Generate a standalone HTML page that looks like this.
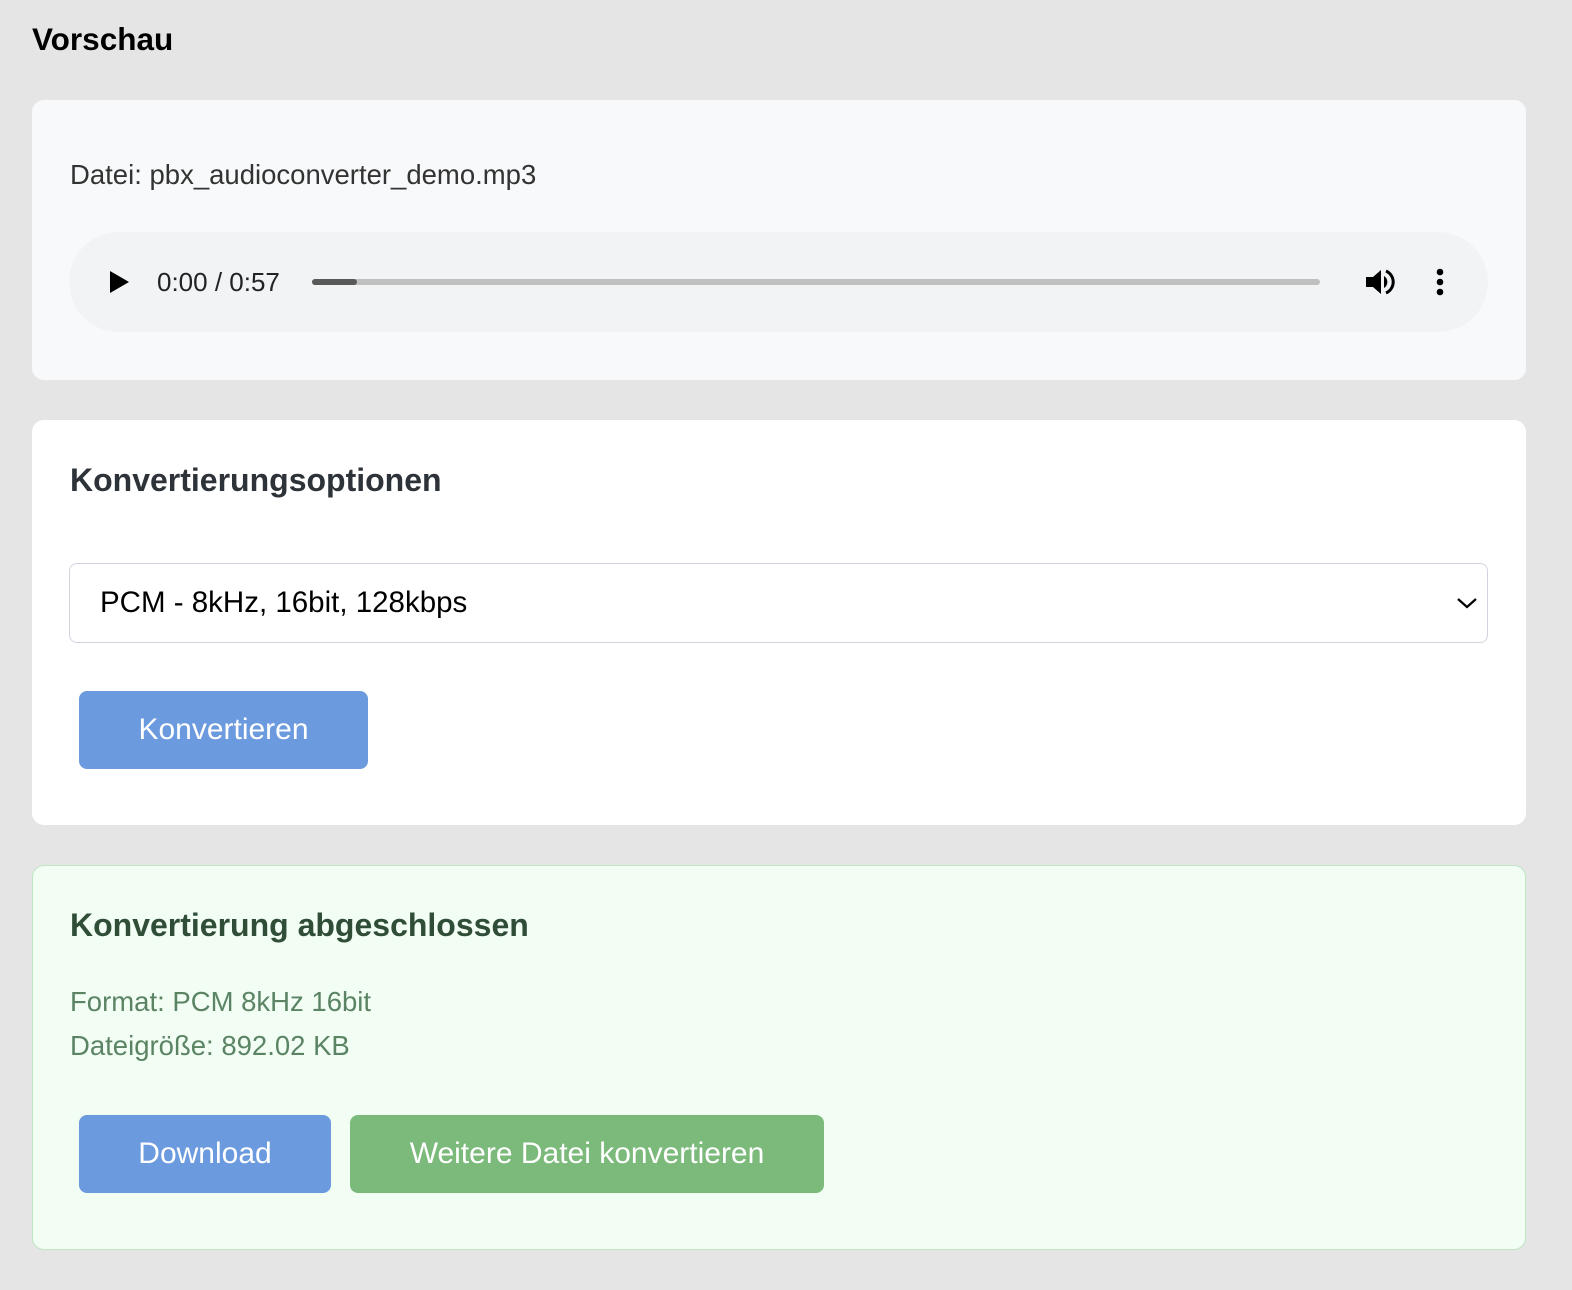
<!DOCTYPE html>
<html><head><meta charset="utf-8"><style>
body{margin:0;width:1572px;height:1290px;background:#e5e5e5;font-family:"Liberation Sans",sans-serif;position:relative;overflow:hidden}
.a{position:absolute;white-space:nowrap}
.card{position:absolute;left:32px;width:1494px;border-radius:12px}
.btn{position:absolute;border-radius:8px;color:#fff;font-size:30px;text-align:center;line-height:78px;height:78px}
</style></head><body>
<div class="a" style="left:32px;top:21px;font-size:31.5px;font-weight:bold;color:#000">Vorschau</div>
<div class="card" style="top:100px;height:280px;background:#f8f9fa"></div>
<div class="a" style="left:70px;top:159px;font-size:27.5px;color:#333">Datei: pbx_audioconverter_demo.mp3</div>
<div class="a" style="left:69px;top:232px;width:1419px;height:100px;border-radius:50px;background:#f1f3f4"></div>
<svg class="a" style="left:108px;top:270px" width="22" height="24"><path d="M2 1L21 12L2 23Z" fill="#000"/></svg>
<div class="a" style="left:157px;top:267px;font-size:26px;color:#222">0:00 / 0:57</div>
<div class="a" style="left:312px;top:279px;width:1008px;height:6px;border-radius:3px;background:#c0c0c0"></div>
<div class="a" style="left:312px;top:279px;width:45px;height:6px;border-radius:3px;background:#595959"></div>
<svg class="a" style="left:1364px;top:266px" width="34" height="32" viewBox="0 0 34 32"><path d="M2 11H9L17 4V28L9 21H2Z" fill="#000"/><path d="M20 10A7 7 0 0 1 20 22Z" fill="#000"/><path d="M22 5A12 12 0 0 1 22 27" stroke="#000" stroke-width="3" fill="none"/></svg>
<svg class="a" style="left:1433px;top:268px" width="14" height="30"><circle cx="7" cy="4" r="3.3"/><circle cx="7" cy="14" r="3.3"/><circle cx="7" cy="24" r="3.3"/></svg>

<div class="card" style="top:420px;height:405px;background:#fff"></div>
<div class="a" style="left:70px;top:462px;font-size:32px;font-weight:bold;color:#2d3338">Konvertierungsoptionen</div>
<div class="a" style="left:69px;top:563px;width:1417px;height:78px;border:1px solid #d0d5dd;border-radius:8px;background:#fff"></div>
<div class="a" style="left:100px;top:586px;font-size:29.5px;color:#000">PCM - 8kHz, 16bit, 128kbps</div>
<svg class="a" style="left:1456px;top:596px" width="22" height="14"><path d="M2 3L11 11L20 3" stroke="#000" stroke-width="2.2" fill="none"/></svg>
<div class="btn" style="left:79px;top:691px;width:289px;background:#6c9ade">Konvertieren</div>

<div class="card" style="top:865px;background:#f2fdf3;border:1px solid #bfe6c2;box-sizing:border-box;height:385px"></div>
<div class="a" style="left:70px;top:907px;font-size:32px;font-weight:bold;color:#2f4d37">Konvertierung abgeschlossen</div>
<div class="a" style="left:70px;top:986px;font-size:27.5px;color:#5b8465">Format: PCM 8kHz 16bit</div>
<div class="a" style="left:70px;top:1030px;font-size:27.5px;color:#5b8465">Dateigröße: 892.02 KB</div>
<div class="btn" style="left:79px;top:1115px;width:252px;background:#6c9ade">Download</div>
<div class="btn" style="left:350px;top:1115px;width:474px;background:#7bba7b">Weitere Datei konvertieren</div>
</body></html>
